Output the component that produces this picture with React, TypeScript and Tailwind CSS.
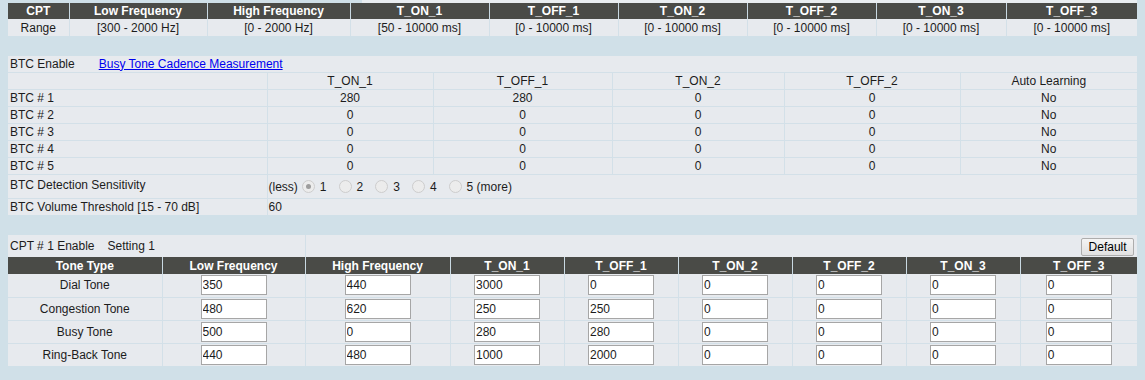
const RANGE_COLS = [
  { name: "CPT", range: "Range", w: 61 },
  { name: "Low Frequency", range: "[300 - 2000 Hz]", w: 138 },
  { name: "High Frequency", range: "[0 - 2000 Hz]", w: 143 },
  { name: "T_ON_1", range: "[50 - 10000 ms]", w: 139 },
  { name: "T_OFF_1", range: "[0 - 10000 ms]", w: 129 },
  { name: "T_ON_2", range: "[0 - 10000 ms]", w: 129 },
  { name: "T_OFF_2", range: "[0 - 10000 ms]", w: 129 },
  { name: "T_ON_3", range: "[0 - 10000 ms]", w: 130 },
  { name: "T_OFF_3", range: "[0 - 10000 ms]", w: 131 },
];

const BTC_COLS = [
  { name: "", w: 259 },
  { name: "T_ON_1", w: 166 },
  { name: "T_OFF_1", w: 179 },
  { name: "T_ON_2", w: 172 },
  { name: "T_OFF_2", w: 176 },
  { name: "Auto Learning", w: 177 },
];

const BTC_ROWS = [
  ["BTC # 1", "280", "280", "0", "0", "No"],
  ["BTC # 2", "0", "0", "0", "0", "No"],
  ["BTC # 3", "0", "0", "0", "0", "No"],
  ["BTC # 4", "0", "0", "0", "0", "No"],
  ["BTC # 5", "0", "0", "0", "0", "No"],
];

const TONE_COLS = [
  { name: "Tone Type", w: 154 },
  { name: "Low Frequency", w: 143 },
  { name: "High Frequency", w: 145 },
  { name: "T_ON_1", w: 114 },
  { name: "T_OFF_1", w: 114 },
  { name: "T_ON_2", w: 114 },
  { name: "T_OFF_2", w: 114 },
  { name: "T_ON_3", w: 114 },
  { name: "T_OFF_3", w: 117 },
];

const TONES = [
  ["Dial Tone", "350", "440", "3000", "0", "0", "0", "0", "0"],
  ["Congestion Tone", "480", "620", "250", "250", "0", "0", "0", "0"],
  ["Busy Tone", "500", "0", "280", "280", "0", "0", "0", "0"],
  ["Ring-Back Tone", "440", "480", "1000", "2000", "0", "0", "0", "0"],
];

function Radio({ checked }: { checked?: boolean }) {
  return (
    <span className="inline-flex w-[13px] h-[13px] rounded-full border border-[#cdcdcd] bg-[#ececec] items-center justify-center">
      {checked && <span className="w-[5px] h-[5px] rounded-full bg-[#9d9d9d]" />}
    </span>
  );
}

function Cols({ cols }: { cols: { w: number }[] }) {
  return (
    <colgroup>
      {cols.map((c, i) => (
        <col key={i} style={{ width: c.w }} />
      ))}
    </colgroup>
  );
}

export default function App() {
  return (
    <div className="min-h-[380px] bg-[#d0e0e8] px-[8px] pb-[15px] font-['Liberation_Sans',Arial,sans-serif] text-[12px] leading-[14px] text-[#1c1c1c]">
      <div className="h-[3px] ml-[354px] w-[775px] bg-[#e9edf0]" />

      {/* Range table */}
      <table className="w-[1129px] table-fixed border-collapse bg-[#e7eaee]">
        <Cols cols={RANGE_COLS} />
        <thead>
          <tr className="h-[16px] bg-[#4a4b47] text-white font-bold">
            {RANGE_COLS.map((c) => (
              <th key={c.name} className="p-0 border-x border-[#c9d9e2] first:border-l-0 last:border-r-0 text-center font-bold">
                {c.name}
              </th>
            ))}
          </tr>
        </thead>
        <tbody>
          <tr className="h-[17px]">
            {RANGE_COLS.map((c) => (
              <td key={c.name} className="p-0 border-x border-[#d3e0e8] first:border-l-0 last:border-r-0 text-center">
                {c.range}
              </td>
            ))}
          </tr>
        </tbody>
      </table>

      {/* Busy tone cadence */}
      <table className="mt-[20px] w-[1129px] table-fixed border-collapse bg-[#e7eaee]">
        <Cols cols={BTC_COLS} />
        <tbody>
          <tr className="h-[16px] border-b border-[#d3e0e8]">
            <td colSpan={6} className="p-0 pl-[2px]">
              BTC Enable
              <a href="#" className="ml-[24px] text-[#0000ee] underline">
                Busy Tone Cadence Measurement
              </a>
            </td>
          </tr>
          <tr className="h-[17px] border-b border-[#d3e0e8]">
            {BTC_COLS.map((c, i) => (
              <td key={i} className="p-0 text-center border-l border-[#d3e0e8] first:border-l-0">
                {c.name}
              </td>
            ))}
          </tr>
          {BTC_ROWS.map((row) => (
            <tr key={row[0]} className="h-[17px] border-b border-[#d3e0e8]">
              {row.map((v, i) => (
                <td
                  key={i}
                  className={`p-0 border-l border-[#d3e0e8] first:border-l-0 ${i === 0 ? "pl-[2px] text-left" : "text-center"}`}
                >
                  {v}
                </td>
              ))}
            </tr>
          ))}
          <tr className="h-[24px] border-b border-[#d3e0e8]">
            <td className="p-0 pl-[2px] pb-[2px]">BTC Detection Sensitivity</td>
            <td colSpan={5} className="p-0 pl-[1px] border-l border-[#d3e0e8]">
              <div className="flex items-center pt-[1px]">
                <span>(less)</span>
                {["1", "2", "3", "4", "5 (more)"].map((v, i) => (
                  <span key={v} className="flex items-center ml-[4px] mr-[8px]">
                    <Radio checked={i === 0} />
                    <span className="ml-[5px]">{v}</span>
                  </span>
                ))}
              </div>
            </td>
          </tr>
          <tr className="h-[17px]">
            <td className="p-0 pl-[2px]">BTC Volume Threshold [15 - 70 dB]</td>
            <td colSpan={5} className="p-0 pl-[1px] border-l border-[#d3e0e8]">
              60
            </td>
          </tr>
        </tbody>
      </table>

      {/* Call progress tone settings */}
      <table className="mt-[20px] w-[1129px] table-fixed border-collapse bg-[#e7eaee]">
        <Cols cols={TONE_COLS} />
        <tbody>
          <tr className="h-[22px]">
            <td colSpan={2} className="p-0 pl-[2px]">
              CPT # 1 Enable<span className="ml-[13px]">Setting 1</span>
            </td>
            <td colSpan={7} className="p-0 pr-[3px] text-right border-l border-[#d3e0e8]">
              <button className="h-[18px] w-[53px] mt-[1px] border border-[#adadad] rounded-[2px] bg-gradient-to-b from-[#f4f4f4] to-[#e1e1e1] text-[12px] text-black leading-[14px]">
                Default
              </button>
            </td>
          </tr>
          <tr className="h-[17px] bg-[#4a4b47] text-white font-bold">
            {TONE_COLS.map((c) => (
              <td key={c.name} className="p-0 text-center border-x border-[#c9d9e2] first:border-l-0 last:border-r-0">
                {c.name}
              </td>
            ))}
          </tr>
          {TONES.map((row, r) => (
            <tr key={row[0]} className={`h-[23px] ${r < TONES.length - 1 ? "border-b border-[#d3e0e8]" : ""}`}>
              {row.map((v, i) => (
                <td key={i} className="p-0 text-center border-x border-[#d3e0e8] first:border-l-0 last:border-r-0">
                  {i === 0 ? (
                    v
                  ) : (
                    <input
                      readOnly
                      value={v}
                      className="block mx-auto w-[66px] h-[20px] border border-[#a6a6a6] bg-white px-[1px] text-[12px] text-[#1c1c1c] outline-none"
                    />
                  )}
                </td>
              ))}
            </tr>
          ))}
        </tbody>
      </table>
    </div>
  );
}
